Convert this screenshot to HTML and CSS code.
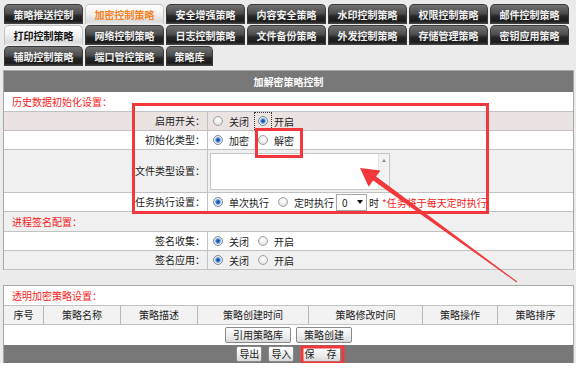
FILE: index.html
```html
<!DOCTYPE html>
<html lang="zh">
<head>
  <meta charset="UTF-8">
  <title>加解密策略控制</title>
  <link rel="stylesheet" href="styles.css">
</head>
<body>
  <div class="page">
    <div class="tabs">
      <span class="tab">策略推送控制</span>
      <span class="tab current">加密控制策略</span>
      <span class="tab">安全增强策略</span>
      <span class="tab">内容安全策略</span>
      <span class="tab">水印控制策略</span>
      <span class="tab">权限控制策略</span>
      <span class="tab">邮件控制策略</span>
      <span class="tab light">打印控制策略</span>
      <span class="tab">网络控制策略</span>
      <span class="tab">日志控制策略</span>
      <span class="tab">文件备份策略</span>
      <span class="tab">外发控制策略</span>
      <span class="tab">存储管理策略</span>
      <span class="tab">密钥应用策略</span>
      <span class="tab">辅助控制策略</span>
      <span class="tab">端口管控策略</span>
      <span class="tab short">策略库</span>
    </div>

    <div class="panel">
      <div class="panel-title">加解密策略控制</div>
      <div class="section">历史数据初始化设置：</div>
      <div class="row hover">
        <div class="label">启用开关：</div>
        <div class="value">
          <span class="opt"><i class="radio"></i>关闭</span>
          <span class="opt"><i class="radio on focus"></i>开启</span>
        </div>
      </div>
      <div class="row">
        <div class="label">初始化类型：</div>
        <div class="value">
          <span class="opt"><i class="radio on"></i>加密</span>
          <span class="opt"><i class="radio"></i>解密</span>
        </div>
      </div>
      <div class="row tall alt">
        <div class="label">文件类型设置：</div>
        <div class="value boxed">
          <div class="textbox">
            <textarea></textarea>
            <span class="scroll"><i class="up"></i></span>
          </div>
        </div>
      </div>
      <div class="row">
        <div class="label">任务执行设置：</div>
        <div class="value">
          <span class="opt"><i class="radio on"></i>单次执行</span>
          <span class="opt last"><i class="radio"></i>定时执行</span>
          <span class="select">0<i class="caret"></i></span>
          <span class="unit">时</span>
          <span class="hint">*任务将于每天定时执行</span>
        </div>
      </div>
      <div class="section alt">进程签名配置：</div>
      <div class="row">
        <div class="label">签名收集：</div>
        <div class="value">
          <span class="opt"><i class="radio on"></i>关闭</span>
          <span class="opt"><i class="radio"></i>开启</span>
        </div>
      </div>
      <div class="row alt">
        <div class="label">签名应用：</div>
        <div class="value">
          <span class="opt"><i class="radio on"></i>关闭</span>
          <span class="opt"><i class="radio"></i>开启</span>
        </div>
      </div>
    </div>

    <div class="panel list">
      <div class="section">透明加密策略设置：</div>
      <div class="cols">
        <span class="c1">序号</span>
        <span class="c2">策略名称</span>
        <span class="c3">策略描述</span>
        <span class="c4">策略创建时间</span>
        <span class="c5">策略修改时间</span>
        <span class="c6">策略操作</span>
        <span class="c7">策略排序</span>
      </div>
      <div class="actions">
        <button class="btn">引用策略库</button>
        <button class="btn">策略创建</button>
      </div>
      <div class="footer">
        <button class="btn small">导出</button>
        <button class="btn small">导入</button>
        <button class="btn save">保 存</button>
      </div>
    </div>
  </div>

  <svg class="marks" width="585" height="372" viewBox="0 0 585 372">
    <rect x="133.5" y="104.5" width="354" height="108"/>
    <rect x="256.5" y="129.5" width="45" height="27"/>
    <rect x="302" y="347" width="41" height="16" stroke-width="2"/>
    <polygon class="arrow" points="360,168 380.5,170.5 376.1,176.6 517.3,281.6 516.7,282.4 373.1,180.6 368.7,186.7"/>
  </svg>
</body>
</html>
```

FILE: styles.css
```css
body {
  margin: 0;
  font-family: "Noto Sans CJK SC", "Liberation Sans", sans-serif;
  font-size: 10px;
  color: #222;
  background: #fff;
  position: relative;
}

.page {
  width: 576px;
  background: #ebebeb;
  padding-top: 4px;
  overflow: hidden;
}

/* tabs */
.tabs {
  display: flex;
  flex-wrap: wrap;
  gap: 1px 2px;
  width: 565px;
  margin-left: 4px;
}

.tab {
  width: 79px;
  height: 20px;
  line-height: 19px;
  text-align: center;
  font-weight: bold;
  color: #f0f0f0;
  border: 1px solid #3a3a3a;
  border-bottom: none;
  border-radius: 5px 5px 0 0;
  box-sizing: border-box;
  background: linear-gradient(#727272, #4c4c4c 45%, #282828 58%, #1b1b1b 85%, #4a4a4a);
}

.tab.current,
.tab.light {
  border-color: #c4c4c4;
  background: linear-gradient(#fefefe, #f0f0f0 50%, #dadada 85%, #e8e8e8);
}

.tab.current {
  color: #f5821f;
}

.tab.light {
  color: #111;
}

.tab.short {
  width: 47px;
}

/* panels */
.panel {
  width: 571px;
  margin: 4px 0 0 3px;
  border: 1px solid #a8a8a8;
  border-bottom: none;
  box-sizing: border-box;
  background: #fff;
}

.panel.list {
  margin-top: 15px;
}

.panel-title {
  height: 21px;
  line-height: 21px;
  background: #787878;
  color: #fff;
  font-weight: bold;
  text-align: center;
}

.section {
  height: 20px;
  line-height: 19px;
  padding-left: 8px;
  color: #f41c1c;
  border-bottom: 1px solid #c2c2c2;
  box-sizing: border-box;
  background: #fff;
}

.row {
  display: flex;
  height: 19px;
  border-bottom: 1px solid #c2c2c2;
  box-sizing: border-box;
  background: #fff;
}

.alt {
  background: #f0f0f0;
}

.row.hover {
  background: #ebe2e2;
}

.row.tall {
  height: 43px;
}

.label {
  width: 204px;
  padding-right: 2px;
  border-right: 1px solid #c2c2c2;
  box-sizing: border-box;
  text-align: right;
  line-height: 18px;
}

.row.tall .label {
  line-height: 42px;
}

.value {
  display: flex;
  align-items: center;
  padding-left: 5px;
  white-space: nowrap;
}

.value.boxed {
  padding-left: 2px;
}

.opt {
  display: inline-flex;
  align-items: center;
  margin-right: 9px;
}

.opt.last {
  margin-right: 0;
}

.radio {
  position: relative;
  display: inline-block;
  width: 10px;
  height: 10px;
  margin-right: 6px;
  border: 1px solid #a2a2a2;
  border-radius: 50%;
  box-sizing: border-box;
  background: radial-gradient(circle at 50% 40%, #fff, #f2f2f2 40%, #d2d2d2);
}

.radio.on {
  border-color: #7a8a9a;
  background: radial-gradient(circle, #0d3f86 0, #2b6fc2 1.5px, #8cb8e6 2.6px, #f0f0f0 3.4px, #d0d0d0 5px);
}

.radio.focus::after {
  content: "";
  position: absolute;
  left: -5px;
  top: -5px;
  right: -5px;
  bottom: -5px;
  border: 1px dotted #333;
}

.textbox {
  display: flex;
  width: 180px;
  height: 37px;
  border: 1px solid #c6c6c6;
  box-sizing: border-box;
  background: #fff;
}

.textbox textarea {
  flex: 1;
  margin: 0;
  padding: 0;
  border: none;
  outline: none;
  resize: none;
  background: transparent;
  font: inherit;
}

.scroll {
  width: 10px;
  background: #f3f3f3;
  border-left: 1px solid #e2e2e2;
}

.up {
  display: block;
  width: 0;
  height: 0;
  margin: 5px auto 0;
  border-left: 2px solid transparent;
  border-right: 2px solid transparent;
  border-bottom: 3px solid #8a8a8a;
}

.select {
  display: inline-flex;
  align-items: center;
  justify-content: space-between;
  width: 31px;
  height: 17px;
  margin-left: 2px;
  padding: 0 3px 0 5px;
  border: 1px solid #a6a6a6;
  box-sizing: border-box;
  background: #fff;
}

.caret {
  width: 0;
  height: 0;
  border-left: 3px solid transparent;
  border-right: 3px solid transparent;
  border-top: 4px solid #111;
}

.unit {
  margin-left: 2px;
}

.hint {
  margin-left: 3px;
  color: #f41c1c;
}

/* policy list */
.cols {
  display: flex;
  height: 19px;
  line-height: 18px;
  border-bottom: 1px solid #c2c2c2;
  box-sizing: border-box;
  background: #f2f2f2;
  text-align: center;
}

.cols span {
  border-right: 1px solid #b8b8b8;
  box-sizing: border-box;
}

.cols .c1 { width: 40px; }
.cols .c2 { width: 77px; }
.cols .c3 { width: 77px; }
.cols .c4 { width: 111px; }
.cols .c5 { width: 114px; }
.cols .c6 { width: 75px; }
.cols .c7 { flex: 1; border-right: none; }

.actions {
  display: flex;
  justify-content: center;
  align-items: center;
  gap: 5px;
  height: 20px;
  background: #fff;
}

.footer {
  display: flex;
  justify-content: center;
  align-items: center;
  gap: 6px;
  height: 18px;
  background: #787878;
}

.btn {
  height: 16px;
  margin: 0;
  padding: 0 7px;
  font: inherit;
  line-height: 14px;
  color: #222;
  border: 1px solid #8a8a8a;
  border-radius: 2px;
  background: linear-gradient(#fefefe, #ececec 60%, #d8d8d8);
}

.btn.small {
  padding: 0 2px;
}

.btn.save {
  padding: 0 3px;
  word-spacing: 10px;
}

/* annotations drawn over the screenshot */
.marks {
  position: absolute;
  left: 0;
  top: 0;
  pointer-events: none;
}

.marks rect {
  fill: none;
  stroke: #f2383a;
  stroke-width: 3;
}

.marks .arrow {
  fill: #f2383a;
}
```
